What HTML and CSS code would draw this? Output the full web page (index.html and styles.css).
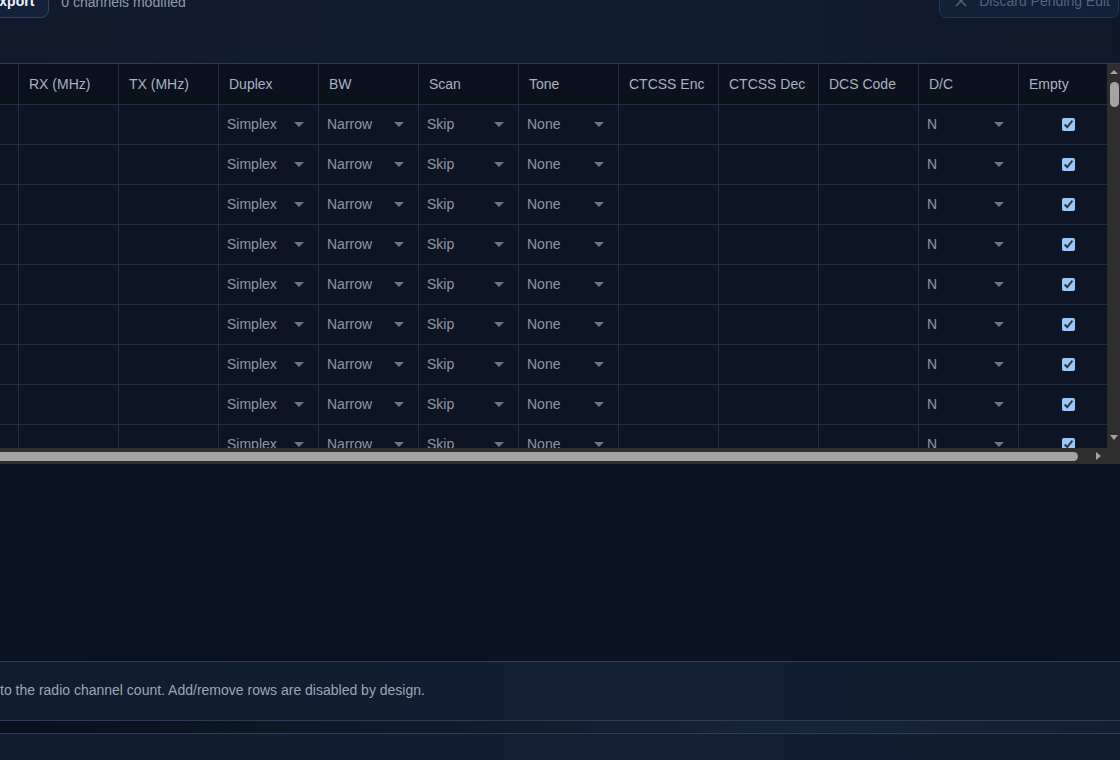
FILE: index.html
```html
<!DOCTYPE html>
<html>
<head>
  <title>Channel Editor</title>
  <link rel="stylesheet" href="styles.css">
</head>
<body>
  <div class="app">
    <div class="toolbar">
      <div class="toolbar-left">
        <button class="btn btn-export">Export</button>
        <span class="status">0 channels modified</span>
      </div>
      <button class="btn btn-discard" disabled>
        <svg viewBox="0 0 12 12"><path d="M1 1 L11 11 M11 1 L1 11"/></svg>
        <span>Discard Pending Edit</span>
      </button>
    </div>

    <div class="grid-shell">
      <div class="grid-main">
        <div class="grid-viewport">
          <table id="channel-table">
            <thead>
              <tr>
                <th>Name</th>
                <th>RX (MHz)</th>
                <th>TX (MHz)</th>
                <th>Duplex</th>
                <th>BW</th>
                <th>Scan</th>
                <th>Tone</th>
                <th>CTCSS Enc</th>
                <th>CTCSS Dec</th>
                <th>DCS Code</th>
                <th>D/C</th>
                <th>Empty</th>
              </tr>
            </thead>
            <tbody id="channel-body"></tbody>
          </table>
        </div>
        <div class="vscroll">
          <span class="arrow-up"></span>
          <span class="vthumb"></span>
          <span class="arrow-down"></span>
        </div>
      </div>
      <div class="hscroll">
        <span class="hthumb"></span>
        <span class="arrow-right"></span>
      </div>
      <div class="grid-fill"></div>
    </div>

    <div class="note">to the radio channel count. Add/remove rows are disabled by design.</div>
    <div class="band"></div>
    <div class="footer"></div>
  </div>

  <script>
    // Build the fixed set of channel rows
    function selectCell(value) {
      return `<td class="pick"><span class="sel">${value}</span></td>`;
    }

    function buildRows(count) {
      const body = document.getElementById('channel-body');
      body.innerHTML = '';
      for (let i = 0; i < count; i++) {
        const row = document.createElement('tr');
        row.innerHTML = `
          <td></td>
          <td></td>
          <td></td>
          ${selectCell('Simplex')}
          ${selectCell('Narrow')}
          ${selectCell('Skip')}
          ${selectCell('None')}
          <td></td>
          <td></td>
          <td></td>
          ${selectCell('N')}
          <td class="check"><input type="checkbox" checked></td>
        `;
        body.appendChild(row);
      }
    }

    buildRows(10);
  </script>
</body>
</html>
```

FILE: styles.css
```css
* {
  box-sizing: border-box;
}

html, body {
  margin: 0;
  height: 100%;
}

body {
  font-family: "Liberation Sans", Arial, sans-serif;
  font-size: 14px;
  color: #a7b1c2;
  background-color: #0b1322;
  overflow: hidden;
  color-scheme: dark;
}

.app {
  margin-top: -16px;
  display: flex;
  flex-direction: column;
}

/* Top toolbar */
.toolbar {
  height: 79px;
  flex: none;
  display: flex;
  justify-content: space-between;
  align-items: flex-start;
  padding-right: 1px;
  background: linear-gradient(90deg, #101a2b 0%, #111c2f 55%, #0f192a 100%);
}

.toolbar-left {
  display: flex;
  align-items: center;
  gap: 12px;
  margin-left: -25px;
}

.btn {
  height: 34px;
  display: inline-flex;
  align-items: center;
  padding: 0 14px;
  border: 1px solid #31435f;
  border-radius: 8px;
  background-color: #14213a;
  font: inherit;
  white-space: nowrap;
}

.btn-export {
  font-weight: bold;
  color: #f1f5fb;
}

.status {
  padding-top: 2px;
  color: #8e9ab0;
  white-space: nowrap;
}

.btn-discard {
  flex: none;
  padding: 0 8px 0 15px;
  color: #55627a;
  border-color: #263650;
  background-color: #122038;
}

.btn-discard svg {
  width: 12px;
  height: 12px;
  margin-right: 12px;
  fill: none;
  stroke: #55627a;
  stroke-width: 1.5;
}

/* Channel grid */
.grid-shell {
  height: 598px;
  flex: none;
  display: flex;
  flex-direction: column;
  border-top: 1px solid #2b3c56;
  background-color: #0b1322;
}

.grid-main {
  height: 384px;
  display: flex;
}

.grid-viewport {
  flex: 1;
  overflow: hidden;
  background-color: #0d1525;
}

#channel-table {
  border-collapse: separate;
  border-spacing: 0;
  table-layout: fixed;
  width: 1200px;
  margin-left: -81px;
}

th, td {
  width: 100px;
  padding: 0 0 0 10px;
  text-align: left;
  border-right: 1px solid #1f2f47;
  border-bottom: 1px solid #1f2f47;
}

th {
  height: 41px;
  font-weight: normal;
  color: #a7b1c2;
  background-color: #0b111d;
}

td {
  height: 40px;
  padding-bottom: 1px;
}

td.pick {
  padding: 0 0 1px 0;
}

.sel {
  display: flex;
  align-items: center;
  justify-content: space-between;
  padding: 0 14px 0 8px;
  color: #8d97a7;
}

.sel::after {
  content: '';
  width: 0;
  height: 0;
  border-left: 5px solid transparent;
  border-right: 5px solid transparent;
  border-top: 5px solid #6c7686;
}

td.check {
  padding: 0 0 2px 0;
  text-align: center;
}

td.check input {
  width: 13px;
  height: 13px;
  margin: 0;
  vertical-align: middle;
}

/* Scrollbars */
.vscroll {
  width: 13px;
  flex: none;
  display: flex;
  flex-direction: column;
  padding: 6px 0 8px 3px;
  background-color: #2e2e2e;
}

.arrow-up {
  width: 0;
  height: 0;
  border-left: 4px solid transparent;
  border-right: 4px solid transparent;
  border-bottom: 4px solid #a3a3a3;
}

.vthumb {
  width: 9px;
  height: 25px;
  margin-top: 8px;
  border-radius: 5px;
  background-color: #a3a3a3;
}

.arrow-down {
  width: 0;
  height: 0;
  margin-top: auto;
  border-left: 4px solid transparent;
  border-right: 4px solid transparent;
  border-top: 5px solid #a3a3a3;
}

.hscroll {
  height: 16px;
  flex: none;
  display: flex;
  align-items: center;
  background-color: #2e2e2e;
}

.hthumb {
  width: 1098px;
  height: 9px;
  margin-left: -20px;
  border-radius: 5px;
  background-color: #a3a3a3;
}

.arrow-right {
  width: 0;
  height: 0;
  margin-left: auto;
  margin-right: 19px;
  border-top: 4px solid transparent;
  border-bottom: 4px solid transparent;
  border-left: 5px solid #a3a3a3;
}

.grid-fill {
  flex: 1;
  background-color: #0b1322;
}

/* Footer note and bottom bar */
.note {
  height: 60px;
  flex: none;
  display: flex;
  align-items: center;
  padding-bottom: 2px;
  color: #9aa6b8;
  border-top: 1px solid #2c3c56;
  border-bottom: 1px solid #2c3c56;
  background: linear-gradient(90deg, #111c2e 0%, #121f35 60%, #111c2e 100%);
}

.band {
  height: 13px;
  flex: none;
  border-bottom: 1px solid #2c3c56;
  background: linear-gradient(90deg, #0a111d 0%, #0f1a2b 40%, #17253a 72%, #121e31 100%);
}

.footer {
  height: 40px;
  flex: none;
  background: linear-gradient(90deg, #111c2e 0%, #121f36 60%, #111c2e 100%);
}
```
